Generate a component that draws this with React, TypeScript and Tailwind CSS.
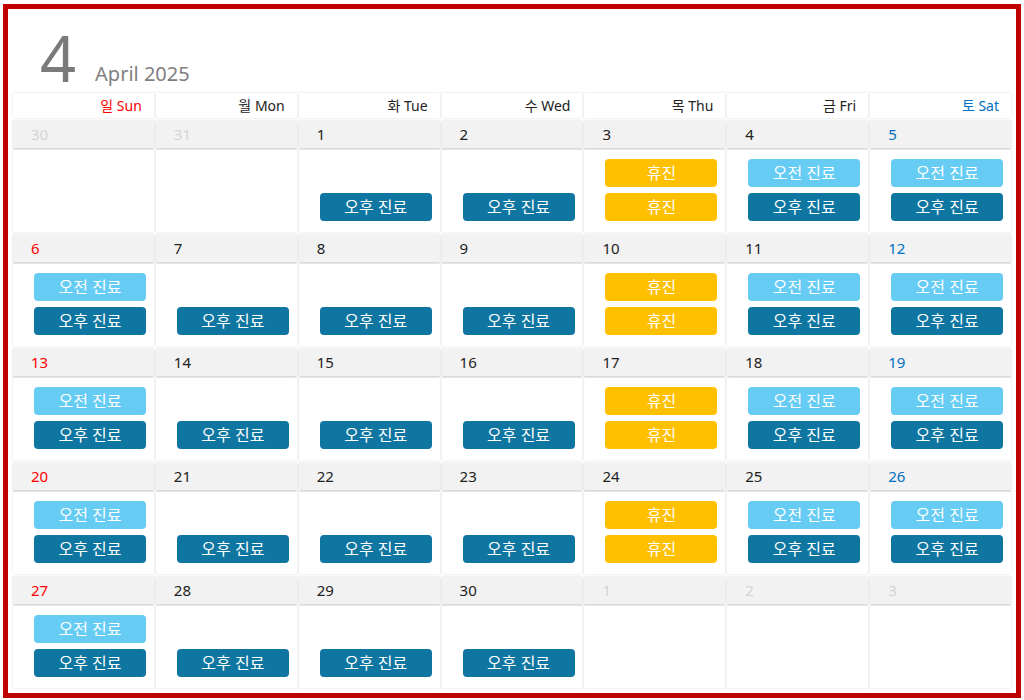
import React from "react";

type Ev = "am" | "pm" | "off";
type Day = { n: number; other?: boolean; ev: Ev[] };

const font = { fontFamily: '"Noto Sans", "Noto Sans CJK KR", sans-serif' };

const weekdays = [
  { t: "일 Sun", c: "text-[#ff0000]" },
  { t: "월 Mon", c: "text-[#222]" },
  { t: "화 Tue", c: "text-[#222]" },
  { t: "수 Wed", c: "text-[#222]" },
  { t: "목 Thu", c: "text-[#222]" },
  { t: "금 Fri", c: "text-[#222]" },
  { t: "토 Sat", c: "text-[#0070c0]" },
];

function build(): Day[][] {
  const weeks: Day[][] = [];
  const all: Day[] = [
    { n: 30, other: true, ev: [] },
    { n: 31, other: true, ev: [] },
  ];
  for (let d = 1; d <= 30; d++) {
    const dow = (d + 1) % 7; // Apr 1 is Tuesday (2)
    let ev: Ev[] = [];
    if (dow === 0 || dow === 5 || dow === 6) ev = ["am", "pm"];
    else if (dow === 4) ev = ["off", "off"];
    else ev = ["pm"];
    all.push({ n: d, ev });
  }
  all.push({ n: 1, other: true, ev: [] }, { n: 2, other: true, ev: [] }, { n: 3, other: true, ev: [] });
  for (let i = 0; i < all.length; i += 7) weeks.push(all.slice(i, i + 7));
  return weeks;
}

function Badge({ kind }: { kind: Ev }) {
  const cls =
    kind === "am"
      ? "bg-[#66ccf4]"
      : kind === "pm"
      ? "bg-[#0e76a0]"
      : "bg-[#ffc000]";
  const label = kind === "am" ? "오전 진료" : kind === "pm" ? "오후 진료" : "휴진";
  return (
    <div
      className={`${cls} w-[112px] h-[28px] rounded-[4px] flex items-center justify-center text-white text-[16px] leading-none`}
    >
      {label}
    </div>
  );
}

export default function App() {
  const weeks = build();
  return (
    <div className="w-[1024px] h-[700px] bg-white pt-[4px] pl-[3px]" style={font}>
      <div className="w-[1018px] h-[694px] border-[5px] border-[#c00000] px-[5px] flex flex-col">
        <div className="h-[84px] flex items-end pl-[27px] pb-[8px]">
          <span className="text-[63px] leading-none text-[#7a7a7a] mb-[-4px]">4</span>
          <span className="text-[20px] leading-none text-[#7f7f7f] ml-[19px] mb-[1px]">April 2025</span>
        </div>
        <div className="grid grid-cols-7 gap-x-[2px] w-[998px]">
          {weekdays.map((w) => (
            <div
              key={w.t}
              className={`h-[25px] bg-white shadow-[0_0_2px_rgba(0,0,0,0.15)] flex items-center justify-end pr-[12px] text-[14px] ${w.c}`}
            >
              {w.t}
            </div>
          ))}
        </div>
        {weeks.map((wk, wi) => (
          <div key={wi} className="grid grid-cols-7 gap-x-[2px] w-[998px] mt-[2px]">
            {wk.map((d, di) => {
              const color = d.other
                ? "text-[#d4d4d4]"
                : di === 0
                ? "text-[#ff0000]"
                : di === 6
                ? "text-[#0070c0]"
                : "text-[#222]";
              return (
                <div key={di} className="flex flex-col">
                  <div
                    className={`h-[28px] bg-[#f2f2f2] shadow-[0_1px_2px_rgba(0,0,0,0.2)] flex items-center pl-[18px] text-[15px] ${color}`}
                  >
                    {d.n}
                  </div>
                  <div className="h-[82px] mt-[2px] bg-white shadow-[0_0_2px_rgba(0,0,0,0.15)] pt-[9px] pl-[21px] flex flex-col gap-[6px]">
                    {d.ev.length === 1 && <div className="h-[28px]" />}
                    {d.ev.map((e, i) => (
                      <Badge key={i} kind={e} />
                    ))}
                  </div>
                </div>
              );
            })}
          </div>
        ))}
      </div>
    </div>
  );
}
